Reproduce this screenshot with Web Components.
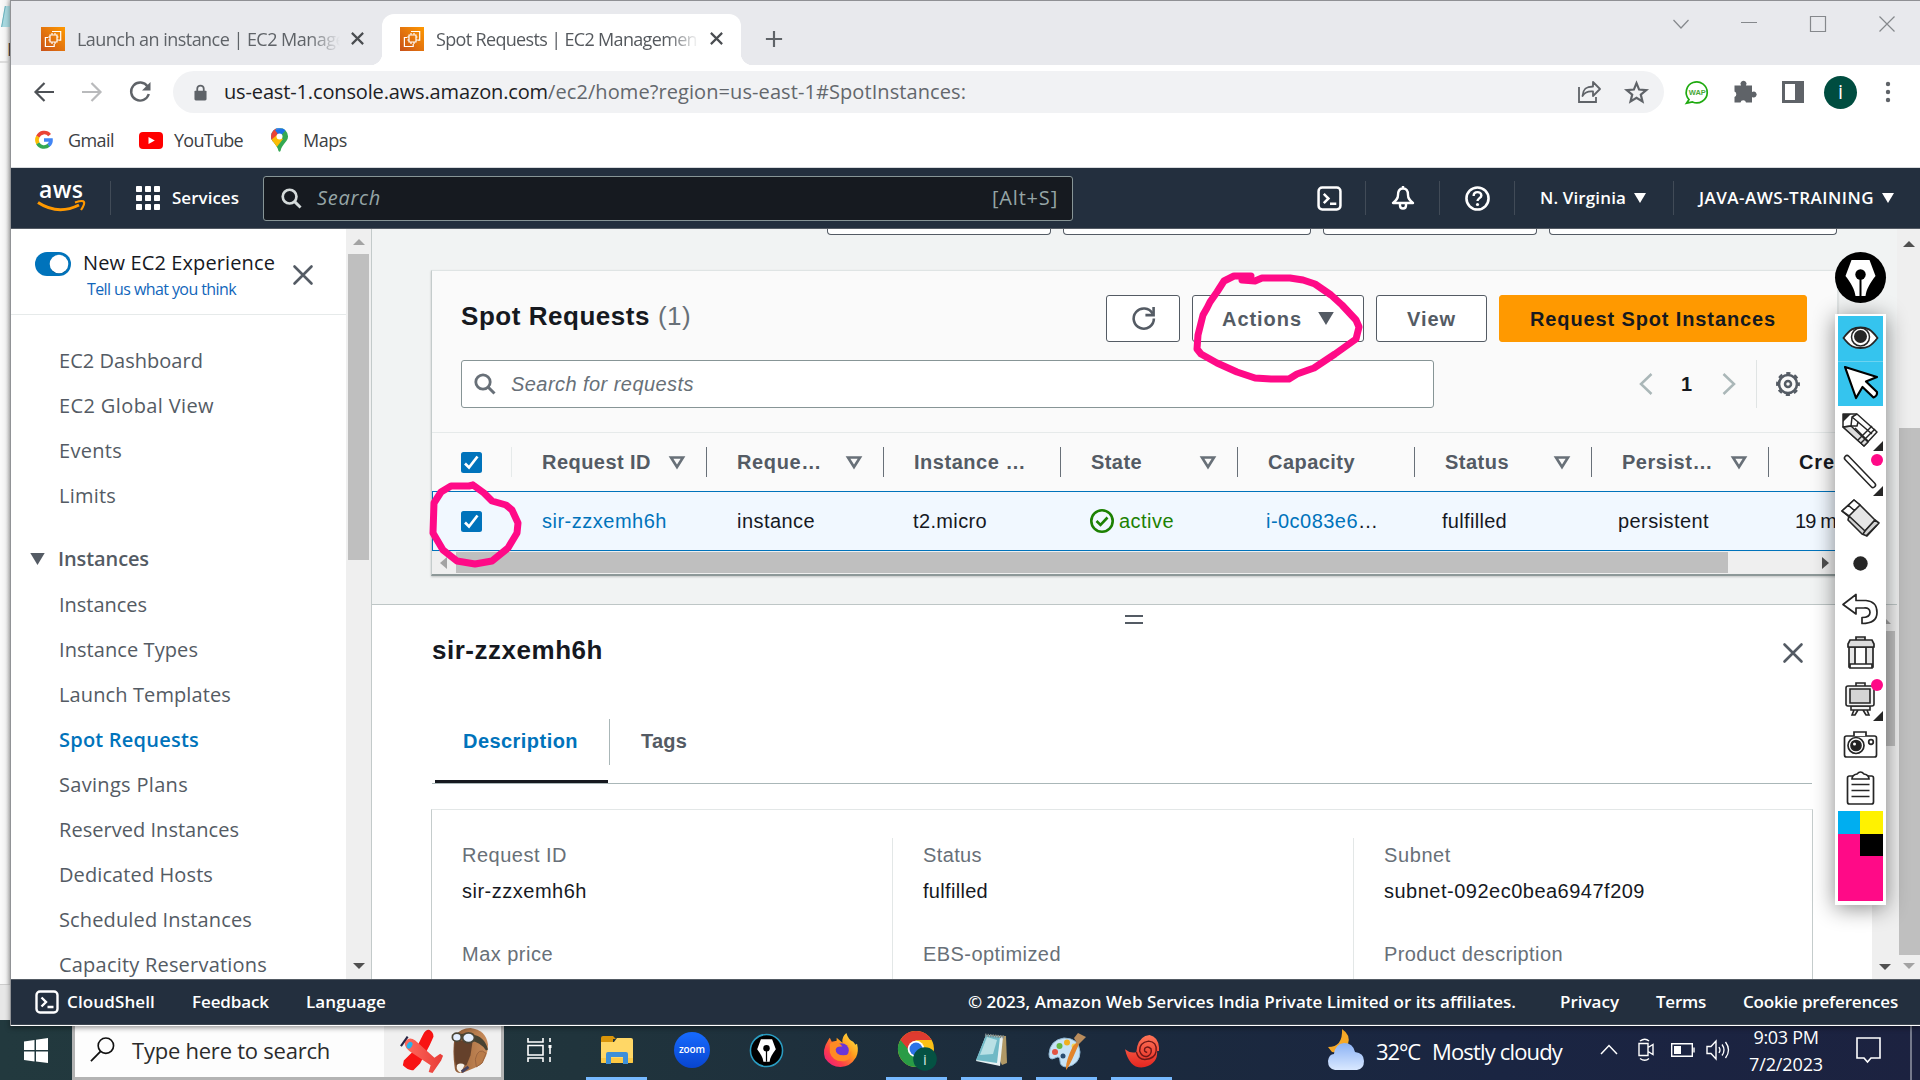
<!DOCTYPE html>
<html lang="en"><head><meta charset="utf-8"><title>Spot Requests | EC2 Management Console</title>
<style>
html,body{margin:0;width:1920px;height:1080px;overflow:hidden;background:#fff}
</style></head><body>
<desk-top></desk-top>
<script>
const SEG='"Open Sans","Noto Sans",sans-serif', ARI='"Liberation Sans",Arial,sans-serif';
const define=(tag,css,html)=>customElements.define(tag,class extends HTMLElement{
  constructor(){super();this.attachShadow({mode:'open'}).innerHTML='<style>*{box-sizing:border-box}:host{box-sizing:border-box;display:flex;flex:none}'+css+'</style>'+html;}
});

/* single line of text, tracked so that it fills the width given in "w" */
customElements.define('ui-text',class extends HTMLElement{
  constructor(){super();this.attachShadow({mode:'open'}).innerHTML='<style>:host{display:block;flex:none;white-space:pre}span{display:inline-block}</style><span><slot></slot></span>';}
  connectedCallback(){
    const s=this.shadowRoot.querySelector('span'),w=+this.getAttribute('w');
    const x=+this.getAttribute('x');if(x)this.style.marginLeft=x+'px';
    if(!w)return;
    this.style.width=w+'px';
    const fit=()=>{s.style.letterSpacing='0px';const n=this.textContent.length,b=s.getBoundingClientRect().width;if(b)s.style.letterSpacing=((w-b)/n).toFixed(3)+'px';};
    fit();requestAnimationFrame(fit);
  }
});

const PEN='<path d="M-9-18h18l6 16C9 6 6 11 5 18H-5C-6 11-9 6-15-2Z" fill="#fff"/><circle cy="-3.500" r="5.200" fill="#000"/><path d="M0 0V18" stroke="#000" stroke-width="2"/>';
const SHELL='<rect x="1.500" y="1.500" width="21" height="21" rx="3.500" fill="none" stroke="#fff" stroke-width="2.400"/><path d="M6.500 7.500l4.500 4.500-4.500 4.500M12.500 17h6" fill="none" stroke="#fff" stroke-width="2.400"/>';
const ICONS={
 ec2:['24 24','<defs><linearGradient id="g" x1="0" y1="1" x2="1" y2="0"><stop offset="0" stop-color="#c8511b"/><stop offset="1" stop-color="#f90"/></linearGradient></defs><path d="M0 0h24v24H0z" fill="url(#g)"/><g fill="none" stroke="#fff" stroke-width="1.200"><path d="M9 8h7v7H9z"/><path d="M11 7.800V6m3 1.800V6m-3 11v-2m3 2v-2M9 10H7.300M9 13H7.300M17.500 10H16m1.500 3H16"/><path d="M11 4.500h8.700v8.700h-2.200M7.200 10.500H4.400v9h8.800v-2.400"/></g>'],
 x:['16 16','<path d="M2 2l12 12M14 2L2 14" stroke="#4a4d51" stroke-width="2.300"/>'],
 plus:['20 20','<path d="M10 1v18M1 10h18" stroke="#5f6368" stroke-width="2.400"/>'],
 back:['20 20','<path d="M20 10H2M10.500 1L1.500 10l9 9" fill="none" stroke="#4d5156" stroke-width="2.200"/>'],
 fwd:['20 20','<path d="M0 10h18M9.500 1l9 9-9 9" fill="none" stroke="#b9babc" stroke-width="2.200"/>'],
 reload:['22 22','<path d="M18.600 5.500A9 9 0 1 0 19.800 13" fill="none" stroke="#5f6368" stroke-width="2.400"/><path d="M21.500 1v8.500H13z" fill="#5f6368"/>'],
 lock:['14 18','<path d="M1.500 7h11q1 0 1 1v8q0 1.500-1.500 1.500H2Q.5 17.500.5 16V8q0-1 1-1Z" fill="#5f6368"/><path d="M3.500 8V5a3.500 3.500 0 0 1 7 0v3" fill="none" stroke="#5f6368" stroke-width="1.900"/>'],
 share:['24 24','<path d="M2 7v15h17v-5" fill="none" stroke="#5f6368" stroke-width="1.800"/><path d="M5.500 16C6 9 9 6.500 16 6.500V2l7 7-7 7v-4.500C11 11 8 12 5.500 16Z" fill="none" stroke="#5f6368" stroke-width="1.800" stroke-linejoin="round"/>'],
 star:['22 22','<path d="M11 2l2.500 6.200 6.800.5-5.200 4.300 1.600 6.500-5.700-3.500-5.700 3.500 1.600-6.500L1.700 8.700l6.800-.5Z" fill="none" stroke="#5f6368" stroke-width="2.100"/>'],
 wap:['24 24','<path d="M4 19.500A10.500 10.500 0 1 1 7.500 22L1.500 23.200Z" fill="none" stroke="#1faa10" stroke-width="1.700"/><text x="12.300" y="14.500" font-size="7.500" font-weight="700" text-anchor="middle" fill="#49a93b" font-family="Liberation Sans">WAP</text>'],
 puzzle:['24 24','<path d="M1.500 5.500H8a3 3 0 1 1 5 0h6V12a3 3 0 1 1 0 5v5.500h-6a2.800 2.800 0 0 0-5.500 0h-6V17a3 3 0 0 0 0-5.500Z" fill="#5f6368"/>'],
 panel:['22 22','<path d="M1.500 1.500h19v19h-19z" fill="none" stroke="#5f6368" stroke-width="3"/><path d="M13 1h8v20h-8z" fill="#5f6368"/>'],
 dots:['6 22','<g fill="#5f6368"><circle cx="3" cy="3" r="2.200"/><circle cx="3" cy="11" r="2.200"/><circle cx="3" cy="19" r="2.200"/></g>'],
 google:['18 18','<g fill="none" stroke-width="3.600"><path d="M14.600 4.100A7 7 0 0 0 2.800 5.800" stroke="#ea4335"/><path d="M2.900 5.500a7 7 0 0 0 0 7" stroke="#fbbc04"/><path d="M2.800 12.300a7 7 0 0 0 11 1.800" stroke="#34a853"/><path d="M9 9h7c.1 2-.6 3.900-2.500 5.300" stroke="#4285f4"/></g>'],
 yt:['24 17','<rect width="24" height="17" rx="4" fill="#f00"/><path d="M9.500 5v7l6.300-3.500z" fill="#fff"/>'],
 maps:['17 24','<clipPath id="m"><path d="M8.500 0A8.300 8.300 0 0 1 17 8.400C17 14 11 15.500 9.500 23q-1 1.500-2 0C6 15.500 0 14 0 8.400A8.300 8.300 0 0 1 8.500 0Z"/></clipPath><g clip-path="url(#m)"><path d="M0 0h17v24H0z" fill="#34a853"/><path d="M-1 16L16 1-1-1z" fill="#4285f4"/><path d="M-1-1h5l4 9L2 14-1 12z" fill="#ea4335"/><path d="M4 2L16 0 9 9z" fill="#1a73e8"/><path d="M0 12l6-5 6 4-7 9z" fill="#fbbc04"/></g><circle cx="8.500" cy="8.400" r="3" fill="#fff"/>'],
 aws:['48 30','<text x="24" y="14.500" font-family="Open Sans" font-size="23" font-weight="600" fill="#fff" text-anchor="middle" textLength="44">aws</text><path d="M1 19.500q20 13 41 2.500" fill="none" stroke="#f90" stroke-width="3"/><path d="M38 19.500q8-2.500 9-.5t-3 8" fill="none" stroke="#f90" stroke-width="2.200"/>'],
 grid:['24 24','<g fill="#fff">'+[0,9,18].map(y=>[0,9,18].map(x=>`<rect x="${x}" y="${y}" width="6" height="6" rx=".8"/>`).join('')).join('')+'</g>'],
 search:['22 22','<circle cx="9" cy="9" r="7.200" fill="none" stroke="currentColor" stroke-width="2.800"/><path d="M14 14l6.500 6.500" stroke="currentColor" stroke-width="3"/>'],
 shell:['24 24',SHELL],
 bell:['24 24','<path d="M12 2.500c-4 0-5 3-5 6.500 0 4-2 5.500-5 8h20c-3-2.500-5-4-5-8 0-3.500-1-6.500-5-6.500Z" fill="none" stroke="#fff" stroke-width="2.400" stroke-linejoin="round"/><path d="M9 17.500v2q0 3 3 3t3-3v-2M12 0v3" fill="none" stroke="#fff" stroke-width="2.400"/>'],
 help:['24 24','<circle cx="12" cy="12" r="10.600" fill="none" stroke="#fff" stroke-width="2.500"/><path d="M8.300 9.500c0-5 7.400-4.500 7.400-.5 0 2.700-3.700 2.600-3.700 5.500" fill="none" stroke="#fff" stroke-width="2.300"/><circle cx="12" cy="17.800" r="1.500" fill="#fff"/>'],
 tri:['12 10','<path d="M0 0h12L6 10Z" fill="currentColor"/>'],
 sort:['16 13','<path d="M2 1.500h12L8 11Z" fill="none" stroke="#687078" stroke-width="2.600"/>'],
 toggle:['36 24','<rect width="36" height="24" rx="12" fill="#0073bb"/><circle cx="24" cy="12.600" r="9.300" fill="#06416b" opacity=".5"/><circle cx="24" cy="12" r="9.300" fill="#fff"/>'],
 close:['20 20','<path d="M1.500 1.500l17 17M18.500 1.500l-17 17" stroke="#545b64" stroke-width="2.600" stroke-linecap="round"/>'],
 check:['21 21','<rect width="21" height="21" rx="2.500" fill="#0073bb"/><path d="M4 11.500l4 4 8.500-11" fill="none" stroke="#fff" stroke-width="2.700"/>'],
 ok:['24 24','<circle cx="12" cy="12" r="10.700" fill="none" stroke="#1d8102" stroke-width="2.600"/><path d="M6.500 12l4 4 7-7.500" fill="none" stroke="#1d8102" stroke-width="2.600"/>'],
 refresh:['26 26','<path d="M22.500 8A10.500 10.500 0 1 0 23.800 13" fill="none" stroke="#545b64" stroke-width="2.700"/><path d="M23.500 1v8.500H15" fill="none" stroke="#545b64" stroke-width="2.700"/>'],
 prev:['14 22','<path d="M12.500 1L2 11l10.500 10" fill="none" stroke="#aab7b8" stroke-width="2.500"/>'],
 next:['14 22','<path d="M1.500 1L12 11 1.500 21" fill="none" stroke="#aab7b8" stroke-width="2.500"/>'],
 gear:['24 24','<circle cx="12" cy="12" r="9" fill="none" stroke="#545b64" stroke-width="2.600"/><circle cx="12" cy="12" r="10.800" fill="none" stroke="#545b64" stroke-width="2.300" stroke-dasharray="4.240 4.240" stroke-dashoffset="2.100"/><circle cx="12" cy="12" r="3" fill="none" stroke="#545b64" stroke-width="2.500"/>'],
 eye:['45 45','<path d="M5.500 22C12 13 16 11.500 22.500 11.500S33 13 39.500 22C33 30.500 29 32 22.500 32S12 30.500 5.500 22Z" fill="#fff" stroke="#262626" stroke-width="1.800"/><circle cx="22.500" cy="21" r="9" fill="#fff" stroke="#262626" stroke-width="1.500"/><circle cx="22.500" cy="20.500" r="6.500" fill="#262626"/>'],
 cursor:['45 45','<path d="M7 6l32 10-11 4.500 11 10.500q.5 4-3.500 5.500L24.500 26 18 37Z" fill="#fff" stroke="#000" stroke-width="2.200" stroke-linejoin="round"/>'],
 pencil:['45 45','<g stroke="#262626" stroke-width="1.500" fill="#fff" stroke-linejoin="round"><path d="M5 8h14l20 18L26 40 5 21Z"/><path d="M5 21l8-1 17 16-4 4z" fill="#ddd"/><path d="M19 8l-5 3-1 9-8 1M14 11l6 5-1 4-6 0M20 16l14 12M17 22l13 13M34 20L20 34M37 23L23 37" fill="none"/></g><path d="M5 8h8l-8 8zM45 35v10H35z" fill="#262626"/>'],
 line:['45 45','<path d="M9 7L35 34" stroke="#262626" stroke-width="6.500" stroke-linecap="round"/><path d="M9 7L35 34" stroke="#fff" stroke-width="3.400" stroke-linecap="round"/><path d="M45 35v10H35z" fill="#262626"/><circle cx="39" cy="9" r="6" fill="#ff0a87"/>'],
 eraser:['45 45','<g stroke="#262626" stroke-width="1.600" fill="#e6e6e6" stroke-linejoin="round"><path d="M16 4l5 4 16 16-11 12-16-16-6-5Z"/><path d="M16 4l6 5L11 20l-7-5ZM10 9l7 6" fill="#fff"/><path d="M37 24l4 3-12 13-5-2-14-14 1-4 16 15Z" fill="#d2d2d2"/><path d="M39 29L28 40M27 35l-2 3" fill="none"/></g>'],
 dot:['45 45','<circle cx="22.500" cy="22.500" r="7.200" fill="#262626"/>'],
 undo:['45 45','<path d="M5 18.500L18 8.500v6h10q11 1 11 12t-15 11v-6q8 0 8-5t-6-4.500H18v6Z" fill="#fff" stroke="#262626" stroke-width="1.700" stroke-linejoin="round"/>'],
 trash:['45 45','<g stroke="#262626" stroke-width="1.700" fill="#e7e7e7"><path d="M18 9V6h9v3" fill="#ccc"/><path d="M11 16h24v20H11z"/><path d="M17 16h11v20H17z" fill="#fff"/><path d="M12 9h22l2 4v3H10v-3Z" fill="#ddd"/><path d="M12 33h22v4H12z" fill="#fff"/></g>'],
 board:['45 45','<g stroke="#262626" stroke-width="1.600" fill="#f3f3f3"><path d="M13 30h19v4H13zM16 34l-2 5h3l3-5M29 34l2 5h-3l-3-5M18 10V7h9v3"/><rect x="8" y="10" width="28" height="20" rx="2"/><path d="M12 13h20v14H12z" fill="#d5d5d5"/></g><path d="M45 35v10H35z" fill="#262626"/><circle cx="39" cy="9" r="6" fill="#ff0a87"/>'],
 camera:['45 45','<g stroke="#262626" stroke-width="1.700" fill="#fff"><rect x="6.500" y="15" width="32" height="21" rx="2"/><path d="M16 15v-4h12v4"/><circle cx="18" cy="24.500" r="8"/><circle cx="18" cy="24.500" r="5" fill="#222"/><circle cx="33" cy="21" r="2.300"/></g><circle cx="16.500" cy="23" r="1.500" fill="#fff"/>'],
 clip:['45 45','<g stroke="#262626" stroke-width="1.700" fill="#fff"><rect x="9.500" y="10" width="26" height="28" rx="2"/><path d="M14 13q0-4 5-5 3.500-4 7 0 5 1 5 5Z"/><path d="M13.500 18.500h18M13.500 24.500h18M13.500 30.500h18" stroke-width="1.400"/></g>'],
 win:['24 25','<path d="M0 3.500L10.500 2v10H0zM12 1.700L24 0v12H12zM0 13.500h10.500v10L0 22zM12 13.500h12V25l-12-1.600z" fill="#fff"/>'],
 wsearch:['26 26','<circle cx="16.500" cy="9" r="8" fill="none" stroke="#111" stroke-width="1.700"/><path d="M11 15L1 25" stroke="#111" stroke-width="1.900"/>'],
 plane:['46 46','<defs><linearGradient id="p"><stop offset="0" stop-color="#ff6a5e"/><stop offset="1" stop-color="#e83b36"/></linearGradient></defs><path d="M24 6Q27 0 31 1 35 3 35 8L31 17 21 36 14 43Q9 44 3 38L4 33 17 20Z" fill="#f81313"/><path d="M5 14q4-7 11-2l20 18 6-4 3 2-2 5-9 13-4-1 2-7L14 26Q4 20 5 14Z" fill="url(#p)"/><ellipse cx="10" cy="17" rx="2.600" ry="3.800" transform="rotate(35 10 17)" fill="#27b3ea"/><path d="M1 18L8 8" stroke="#282442" stroke-width="2.200"/>'],
 hat:['38 47','<defs><linearGradient id="h"><stop offset="0" stop-color="#8a5836"/><stop offset=".5" stop-color="#b4794a"/><stop offset="1" stop-color="#c98d5c"/></linearGradient></defs><path d="M4 8Q10 0 20 0 36 2 38 17 38 30 30 38L24 41 12 46Q5 47 4 42Q1 24 4 8Z" fill="url(#h)"/><path d="M4 14Q14 11 22 15 21 22 20 28L16 38 6 42Q2 27 4 14Z" fill="#65412b"/><path d="M36 26Q28 19 25 32L26 40 32 36Z" fill="#b97b49" stroke="#9a6540"/><path d="M22 7Q34 8 38 22L36 23Q30 14 20 13Z" fill="#474232"/><path d="M1 9L13 8" stroke="#474232" stroke-width="4"/><ellipse cx="6" cy="9.500" rx="4.600" ry="4.200" fill="#e4efff" stroke="#4b4638" stroke-width="1.800"/><ellipse cx="18" cy="10" rx="6.200" ry="5" fill="#e4efff" stroke="#4b4638" stroke-width="2"/><path d="M6 38q4-3 8 0l-4 8q-5-2-4-8Z" fill="#f5f0e8"/><path d="M11 45l7-5" stroke="#45425f" stroke-width="3"/>'],
 tasks:['25 24','<path d="M1 0v4h15V0M1 24v-4h15v4M1 7.500h15v9.500H1zM23 0v4M23 7v9M23 19v5" fill="none" stroke="#fff" stroke-width="1.600"/><path d="M21.500 7h3v3h-3z" fill="#fff"/>'],
 folder:['32 28','<path d="M0 2q0-2 2-2h10l3 3h-3v6H0z" fill="#d9950a"/><path d="M0 6h13l3-4h14q2 0 2 2v22q0 1-1 1H1q-1 0-1-1z" fill="#ffd766"/><path d="M0 22h32v5H0z" fill="#fbc02d" opacity=".6"/><path d="M5 28V18q0-2 2-2h18q2 0 2 2v10h-5v-7H10v7Z" fill="#3d8fd8"/>'],
 zoom:['36 36','<defs><linearGradient id="z" x2="0" y2="1"><stop offset="0" stop-color="#176bff"/><stop offset="1" stop-color="#0845cf"/></linearGradient></defs><circle cx="18" cy="18" r="18" fill="url(#z)"/><text x="18" y="20.500" font-family="Open Sans" font-size="10" font-weight="600" fill="#fff" text-anchor="middle" textLength="26">zoom</text>'],
 pen:['36 36','<circle cx="18" cy="18" r="16.500" fill="#000" stroke="#2a9bc0" stroke-width="1.600"/><g transform="translate(18 18) scale(.64)">'+PEN+'</g>'],
 penbig:['51 51','<circle cx="25.500" cy="25.500" r="25.500" fill="#000"/><g transform="translate(25.500 26)">'+PEN+'</g>'],
 firefox:['36 36','<defs><linearGradient id="f" x1="1" y1="0" x2="0" y2="1"><stop offset="0" stop-color="#fff24a"/><stop offset=".4" stop-color="#ff9a1c"/><stop offset=".7" stop-color="#ff3d4a"/><stop offset="1" stop-color="#e5148c"/></linearGradient></defs><path d="M4 8q1-2 2-3l2 4 5-1V5l6 5q-1-6 4-10 2 7 7 9 2 2 2 3l2-1q2 8-1 14-6 10-16 10T1 26Q-2 17 4 8Z" fill="url(#f)"/><circle cx="18" cy="18" r="7.500" fill="#6a35d8"/><path d="M6 11q8-4 13 3-6-1-7 3 0 6 8 6 6 0 8-5 1 9-7 11-12 1-15-9Z" fill="#ff8a24"/>'],
 chrome:['40 42','<circle cx="18" cy="18" r="18" fill="#fbc116"/><path d="M18 18h0L2.400 9A18 18 0 0 0 18 36L26 22Z" fill="#299c46"/><path d="M18 9h15.600L26 20z" fill="#fbc116"/><path d="M2.400 9A18 18 0 0 1 33.600 9H18L10 18Z" fill="#df3b30"/><circle cx="18" cy="18" r="8.300" fill="#fff"/><circle cx="18" cy="18" r="6.500" fill="#2d73e8"/><circle cx="27" cy="28" r="11.800" fill="#055243"/><text x="27" y="33.500" font-family="Open Sans" font-size="15" fill="#d5e5df" text-anchor="middle">i</text>'],
 notepad:['34 34','<path d="M12 2l19 1 1 27-5 2z" fill="#b09866"/><path d="M11 2l17 2-3 29L1 28Z" fill="#e8f1f3"/><path d="M11 2l14 2-3 26L1 27Z" fill="#70b9c6"/><path d="M12 4l10 3-4 14L5 22Z" fill="#b9e0e5"/><path d="M10 2l19 2" stroke="#7d8a8c" stroke-width="3" stroke-dasharray="1.500 1"/>'],
 paint:['38 38','<path d="M16 6Q31 6 32 20q0 12-13 15-7 0-7-6t-5-3q-6 3-6-4Q2 8 16 6Z" fill="#c8e3f6" stroke="#8fb6d2"/><circle cx="7" cy="20" r="3" fill="#e35443"/><circle cx="11.500" cy="14" r="3" fill="#65b943"/><circle cx="19" cy="10.500" r="3" fill="#f0b020"/><circle cx="26" cy="14" r="2.500" fill="#f4d450"/><circle cx="15" cy="24" r="2.500" fill="#2a4d72"/><path d="M18 36Q18 28 25 14l4-4 2 2-4 9Q21 35 18 38Z" fill="#e2852c"/><path d="M26 6l4-5 8 4-8 8z" fill="#b98c5c"/>'],
 snail:['36 35','<defs><linearGradient id="s" x2="0" y2="1"><stop offset="0" stop-color="#ff7558"/><stop offset="1" stop-color="#e52620"/></linearGradient></defs><path d="M0 15Q6 20 12 18L13 12Q16 1 26 0 35 2 36 13V17H34Q35 30 21 34 5 37 0 15Z" fill="url(#s)"/><path d="M33 17Q34 7 25 6.500 15 8 15.500 17 18 24 24 22.500 29 20 27.500 14.500 24 11 21 14 19.500 18 23.500 18.500M12 18q2 8 9 8 11-1 12-9" fill="none" stroke="#6e1717" stroke-width="1.500"/>'],
 weather:['36 42','<defs><linearGradient id="w" x2="0" y2="1"><stop offset="0" stop-color="#8bb2f5"/><stop offset="1" stop-color="#d9e8ff"/></linearGradient></defs><path d="M14 0q9 6 6 15-5 10-16 8l-4-5q15 0 14-18Z" fill="#f7a927"/><path d="M7 41q-7-1-7-9 1-7 6-7 1-10 10-11 9 0 11 9 9 1 9 9t-7 9Z" fill="url(#w)"/>'],
 chev:['18 11','<path d="M1 10l8-8.500L17 10" fill="none" stroke="#fff" stroke-width="1.500"/>'],
 meet:['17 24','<path d="M2 5.500h9v12H2zM11 9.500l5-3v10l-5-3M3 3q5-3.500 9 0M3 20.500q5 3.500 9 0" fill="none" stroke="#fff" stroke-width="1.400"/>'],
 batt:['24 14','<path d="M.7.700h20.600v12.600H.7zM23 4.500v5" fill="none" stroke="#fff" stroke-width="1.400"/><path d="M3 3h7v8H3z" fill="#fff"/>'],
 vol:['24 20','<path d="M1 6.500h4L10 1v18L5 13.500H1z" fill="none" stroke="#fff" stroke-width="1.400"/><path d="M13 7q2 3 0 6M16 4.500q4 5.500 0 11M19.500 2q6 8 0 16" fill="none" stroke="#fff" stroke-width="1.300"/>'],
 note:['26 26','<path d="M1 1h23v20H15l-3.500 4L8 21H1z" fill="none" stroke="#fff" stroke-width="1.600"/>'],
 wdown:['16 10','<path d="M.5 1l7.500 8 7.500-8" fill="none" stroke="#85888c" stroke-width="1.200"/>'],
 wmin:['16 10','<path d="M0 5.500h16" stroke="#85888c"/>'],
 wmax:['16 16','<path d="M.5.5h15v15H.5z" fill="none" stroke="#85888c" stroke-width="1.200"/>'],
 wx:['16 16','<path d="M.5.500l15 15M15.500.500l-15 15" stroke="#85888c" stroke-width="1.200"/>']
};
customElements.define('ui-icon',class extends HTMLElement{
  constructor(){super();this.attachShadow({mode:'open'});}
  connectedCallback(){
    const [vb,body]=ICONS[this.getAttribute('name')],[vw,vh]=vb.split(' ');
    const w=this.getAttribute('w')||vw,h=this.getAttribute('h')||(vh*w/vw),x=this.getAttribute('x')||0;
    this.shadowRoot.innerHTML=`<style>:host{display:block;flex:none;width:${w}px;height:${h}px;margin-left:${x}px}svg{display:block;overflow:visible}</style><svg width="${w}" height="${h}" viewBox="0 0 ${vb}">${body}</svg>`;
  }
});

/* scroll bar; attributes: thumb and gap lengths, up / down arrow colours */
customElements.define('scroll-bar',class extends HTMLElement{
  constructor(){super();this.attachShadow({mode:'open'});}
  connectedCallback(){
    const a=n=>this.getAttribute(n);
    this.shadowRoot.innerHTML=`<style>:host{display:flex;flex-direction:column;align-items:center;justify-content:space-between;flex:none;background:#efefef;overflow:hidden}
    i{display:block;width:0;height:0;flex:none;border:6px solid transparent}
    .u{border-top:0;border-bottom-color:${a('up')};margin-top:${a('ut')||10}px}.d{border-bottom:0;border-top-color:${a('down')};margin-bottom:10px}
    b{display:block;flex:none;width:${a('bw')||21}px;background:#bfbfbf;height:${a('thumb')}px;margin-top:${a('gap')}px}s{flex:1}</style><i class="u"></i><b></b><s></s><i class="d"></i>`;
  }
});

/* browser chrome */
define('browser-tab',`:host{align-items:center;height:51px;width:359px;padding-bottom:2px;color:#5f6368;font:18px/24px ${SEG};border-radius:12px 12px 0 0}
 :host([active]){background:#fff;color:#55595e}
 .t{width:263px;margin-left:12px;overflow:hidden;-webkit-mask-image:linear-gradient(90deg,#000 88%,transparent)}`,
 `<ui-icon name="ec2"></ui-icon><div class="t"><slot></slot></div><ui-icon name="x" w="15" x="10"></ui-icon>`);
define('tab-strip',`:host{height:64px;background:#e8e9ed;align-items:flex-end;border-top:0}
 .a{padding-left:30px}.b{padding-left:18px;margin-left:0;position:relative}
 .b:before,.b:after{content:"";position:absolute;bottom:0;width:12px;height:12px}
 .b:before{left:-12px;background:radial-gradient(circle at 0 0,transparent 12px,#fff 12.5px)}
 .b:after{right:-12px;background:radial-gradient(circle at 100% 0,transparent 12px,#fff 12.500px)}
 .p{height:51px;display:flex;align-items:center;padding-bottom:2px}.w{height:64px;display:flex;align-items:flex-start;margin-left:auto}
 .w ui-icon{margin-top:15px}`,
 `<browser-tab class="a" style="width:371px"><ui-text w="268">Launch an instance | EC2 Manage</ui-text></browser-tab>
 <browser-tab class="b" active><ui-text w="261">Spot Requests | EC2 Managemen</ui-text></browser-tab>
 <div class="p"><ui-icon name="plus" w="18" x="24"></ui-icon></div>
 <div class="w"><ui-icon name="wdown" style="padding-top:3px"></ui-icon><ui-icon name="wmin" x="52" style="padding-top:1px"></ui-icon><ui-icon name="wmax" x="53"></ui-icon><ui-icon name="wx" x="53" style="margin-right:25px"></ui-icon></div>`);
define('address-row',`:host{height:54px;align-items:center;background:#fff;font:20px/28px ${SEG};padding-left:23px}
 .bar{display:flex;align-items:center;flex:none;width:1491px;height:42px;border-radius:21px;background:#f1f2f4;margin-left:22px;color:#202124}
 .g{color:#63676c}.av{width:33px;height:33px;border-radius:50%;background:#004d40;color:#fff;text-align:center;font:20px/32px ${SEG};margin-left:20px}`,
 `<ui-icon name="back" w="20"></ui-icon><ui-icon name="fwd" w="20" x="28"></ui-icon><ui-icon name="reload" w="22" x="27"></ui-icon>
 <div class="bar"><ui-icon name="lock" w="13" h="17" x="21"></ui-icon><ui-text w="324" x="17">us-east-1.console.aws.amazon.com</ui-text><ui-text class="g" w="418">/ec2/home?region=us-east-1#SpotInstances:</ui-text>
 <ui-icon name="share" x="611" w="24"></ui-icon><ui-icon name="star" w="23" x="24"></ui-icon></div>
 <ui-icon name="wap" w="24" x="21"></ui-icon><ui-icon name="puzzle" w="24" x="24"></ui-icon><ui-icon name="panel" w="22" x="25"></ui-icon><div class="av">i</div><ui-icon name="dots" w="6" x="28"></ui-icon>`);
define('bookmark-bar',`:host{height:49px;align-items:flex-start;background:#fff;font:18px/42px ${SEG};color:#3c4043;padding-left:24px;border-bottom:1px solid #d8dadd}
 div{display:flex;align-items:center;height:42px}`,
 `<div><ui-icon name="google"></ui-icon><ui-text w="46" x="15">Gmail</ui-text><ui-icon name="yt" x="25"></ui-icon><ui-text w="69" x="11">YouTube</ui-text><ui-icon name="maps" x="28"></ui-icon><ui-text w="44" x="15">Maps</ui-text></div>`);

define('aws-nav',`:host{height:61px;background:#232f3e;align-items:center;border-bottom:1px solid #545b64;color:#fff;font:600 17px/24px ${SEG}}
 hr{width:1px;height:34px;border:0;margin:0;background:#414b57;flex:none}
 .s{display:flex;align-items:center;width:810px;height:45px;margin-left:24px;border:1px solid #879596;border-radius:3px;background:#161a20;color:#95a5a6;font:italic 20px/28px ${SEG}}
 .s ui-icon{color:#d5dbdb}.s .k{font-style:normal;color:#95a5a6}`,
 `<ui-icon name="aws" x="26" w="48"></ui-icon><hr style="margin-left:25px"><ui-icon name="grid" x="25"></ui-icon><ui-text w="67" x="12">Services</ui-text>
 <div class="s"><ui-icon name="search" x="17" w="21"></ui-icon><ui-text w="64" x="15">Search</ui-text><ui-text class="k" w="66" x="611">[Alt+S]</ui-text></div>
 <ui-icon name="shell" w="25" x="244"></ui-icon><hr style="margin-left:23px"><ui-icon name="bell" w="24" x="25"></ui-icon><hr style="margin-left:24px"><ui-icon name="help" x="25" w="25"></ui-icon><hr style="margin-left:24px">
 <ui-text w="86" x="25">N. Virginia</ui-text><ui-icon name="tri" x="8"></ui-icon><hr style="margin-left:27px"><ui-text w="175" x="25">JAVA-AWS-TRAINING</ui-text><ui-icon name="tri" x="8"></ui-icon>`);

/* side navigation */
define('side-nav',`:host{width:361px;height:750px;border-right:1px solid #c3caca;background:#fff;font:20px/45px ${SEG};color:#545b64}
 .l{width:335px;overflow:hidden}
 .top{height:86px;display:flex;border-bottom:1px solid #e6eaea;padding-left:24px;align-items:flex-start}
 .top ui-icon:first-child{margin-top:23px}
 .n{margin-left:12px;color:#16191f;line-height:26px;padding-top:21px;width:204px;flex:none}.n .k{font-size:16px;line-height:26px;color:#1166bb}
 .items{padding-left:48px;padding-top:22.500px}.h{display:flex;align-items:center;font-weight:600;margin:18.500px 0 1px -29px;height:45px}
 .on{color:#0073bb;font-weight:600}`,
 `<div class="l"><div class="top"><ui-icon name="toggle"></ui-icon><div class="n"><ui-text w="192">New EC2 Experience</ui-text><ui-text class="k" w="149" x="4">Tell us what you think</ui-text></div><ui-icon name="close" w="20" x="6" style="margin-top:36px"></ui-icon></div>
 <div class="items">${[['EC2 Dashboard',144],['EC2 Global View',155],['Events',63],['Limits',57]].map(a=>`<ui-text w="${a[1]}">${a[0]}</ui-text>`).join('')}
 <div class="h"><ui-icon name="tri" w="15" h="12" ></ui-icon><ui-text w="91" x="13">Instances</ui-text></div>
 ${[['Instances',88],['Instance Types',139],['Launch Templates',172],['Spot Requests',140,1],['Savings Plans',129],['Reserved Instances',180],['Dedicated Hosts',154],['Scheduled Instances',193],['Capacity Reservations',208]].map(a=>`<ui-text w="${a[1]}"${a[2]?' class="on"':''}>${a[0]}</ui-text>`).join('')}</div></div>
 <scroll-bar style="width:25px" up="#a3a3a3" down="#505050" gap="9" thumb="306"></scroll-bar>`);

/* spot request table */
define('ui-button',`:host{height:47px;align-items:center;justify-content:center;border:1.500px solid #545b64;border-radius:3px;background:#fff;color:#545b64;font:700 20px/26px ${ARI}}
 :host([primary]){background:#f90;border-color:#f90;color:#16191f}`,`<slot></slot>`);
define('col-head',`:host{width:177px;height:30px;align-items:center;border-right:1px solid #687078;padding-left:30px;font:700 20px/26px ${ARI};color:#545b64}
 ui-icon{margin-left:auto;margin-right:21px}:host(:not([sort])) ui-icon{display:none}slot{display:block}.z{margin-left:auto}`,`<slot></slot><div class="z"></div><ui-icon name="sort"></ui-icon>`);
define('request-table',`:host{flex-direction:column;width:1407px;height:306px;background:#fafafa;border:1px solid #dfe4e4;border-left-color:#c5cccc;border-bottom:2px solid #8d9898;overflow:hidden;box-shadow:0 1px 2px #0003;font:20px/26px ${ARI};color:#16191f}
 .r{display:flex;align-items:center;flex:none}
 .a{height:71px;align-items:flex-end;padding-left:29px}.ti{align-self:flex-end;display:flex;height:52px;align-items:center;font-size:26px;color:#687078}.ti b{color:#16191f}
 .f{height:91px;padding-left:29px;align-items:center;border-bottom:1px solid #e6eaea;padding-bottom:6px}
 .in{display:flex;align-items:center;width:973px;height:48px;background:#fff;border:1.500px solid #879596;border-radius:3px;font-style:italic;color:#687078}
 hr{width:1px;height:48px;background:#e0e4e4;border:0;margin:0 0 0 20px}
 .h{height:58px;padding-left:29px}.h col-head:last-child{color:#16191f;border:0}
 .row{height:60px;border:1.500px solid #0073bb;border-right:0;background:#f1f8ff;padding-left:28px}
 .c{width:177px;flex:none;display:flex;align-items:center}.c:nth-child(n){color:#16191f}.c .b{color:#0073bb}.c .g{color:#1d8102}
 .sb{height:23px;background:#efefef;flex:none;display:flex;align-items:center}.sb b{width:1272px;height:21px;background:#bfbfbf;margin-left:9px}
 .sb i{border:6px solid transparent;border-left:0;border-right:7px solid #a3a3a3;margin-left:8px}.sb i.e{border:6px solid transparent;border-right:0;border-left:7px solid #505050;margin-left:94px}`,
 `<div class="r a"><div class="ti"><b><ui-text w="189">Spot Requests</ui-text></b><ui-text w="33" x="8">(1)</ui-text></div>
 <ui-button style="width:74px;margin-left:415px"><ui-icon name="refresh" w="25"></ui-icon></ui-button>
 <ui-button style="width:172px;margin-left:12px"><ui-text w="80">Actions</ui-text><ui-icon name="tri" w="16" h="13" x="16"></ui-icon></ui-button>
 <ui-button style="width:111px;margin-left:12px"><ui-text w="49">View</ui-text></ui-button>
 <ui-button primary style="width:308px;margin-left:12px"><ui-text w="246">Request Spot Instances</ui-text></ui-button></div>
 <div class="r f"><div class="in"><ui-icon name="search" x="12" w="22"></ui-icon><ui-text w="183" x="15">Search for requests</ui-text></div>
 <div class="r pg"><ui-icon name="prev" x="205" w="14"></ui-icon><ui-text w="12" x="28" style="font-weight:700">1</ui-text><ui-icon name="next" x="29" w="14"></ui-icon><hr><ui-icon name="gear" x="19"></ui-icon></div></div>
 <div class="r h"><ui-icon name="check"></ui-icon><div style="width:1px;height:30px;background:#e6eaea;margin-left:29px;flex:none"></div>
 <col-head sort style="width:195px"><ui-text w="109">Request ID</ui-text></col-head><col-head sort><ui-text w="85">Reque…</ui-text></col-head><col-head><ui-text w="112">Instance …</ui-text></col-head><col-head sort><ui-text w="51">State</ui-text></col-head><col-head><ui-text w="87">Capacity</ui-text></col-head><col-head sort><ui-text w="64">Status</ui-text></col-head><col-head sort><ui-text w="91">Persist…</ui-text></col-head><col-head style="width:70px"><ui-text w="36">Cre</ui-text></col-head></div>
 <div class="r row"><ui-icon name="check"></ui-icon>
 <div class="c" style="width:195px;margin-left:60px"><ui-text class="b" w="125">sir-zzxemh6h</ui-text></div><div class="c" style="width:176px"><ui-text w="78">instance</ui-text></div><div class="c"><ui-text w="74">t2.micro</ui-text></div><div class="c" style="width:176px"><ui-icon name="ok"></ui-icon><ui-text class="g" w="55" x="5">active</ui-text></div><div class="c" style="width:176px"><ui-text class="b" w="92">i-0c083e6</ui-text><ui-text w="20">…</ui-text></div><div class="c" style="width:176px"><ui-text w="65">fulfilled</ui-text></div><div class="c"><ui-text w="91">persistent</ui-text></div><div class="c" style="width:44px"><ui-text w="41">19 m</ui-text></div></div>
 <div class="sb"><i></i><b></b><i class="e"></i></div>`);
define('top-actions',`:host{height:41px;padding-left:455px;gap:12px;align-items:flex-start;overflow:hidden}
 i{height:6px;background:#fff;border:1.500px solid #545b64;border-top:0;border-radius:0 0 4px 4px}`,
 `<i style="width:224px"></i><i style="width:248px"></i><i style="width:214px"></i><i style="width:288px"></i>`);

/* details panel */
define('detail-field',`:host{flex-direction:column;font:20px/26px ${ARI};color:#16191f;height:99px;gap:10px}::slotted(:first-child){color:#687078}`,`<slot></slot>`);
define('detail-panel',`:host{height:375px;width:1525px;background:#fff;border-top:1.500px solid #bec6c6;overflow:hidden;font:20px/26px ${ARI}}
 .m{width:1500px;padding-left:60px;display:flex;flex-direction:column}
 .g{width:18px;height:9px;border:solid #545b64;border-width:2px 0;margin:10px 0 0 693px;flex:none}
 .t{display:flex;align-items:center;width:1380px;height:50px;margin-top:1px;font-weight:700;font-size:26px;color:#16191f;flex:none}.t ui-icon{margin-top:5px}
 .tabs{display:flex;height:109px;align-items:flex-end;width:1380px;border-bottom:1.500px solid #aab7b8;flex:none;font-weight:700;color:#545b64}
 .tab{height:82px;display:flex;align-items:center;padding-bottom:2px}.on{padding-bottom:0;width:173px;margin-left:3px;padding-left:28px;color:#0073bb;border-bottom:3px solid #16191f}
 .card{width:1382px;height:200px;margin:25px 0 0 -1px;border:1.500px solid #e3e7e7;border-left-color:#c5cccc;border-right-color:#c5cccc;padding:28px 0 0 30px;display:flex;flex:none}
 .col{width:461px;border-left:1px solid #e3e7e7;padding:4px 0 0 30px;flex:none}.col:first-child{border:0;padding-left:0;width:430px}.col:last-child{width:400px}`,
 `<div class="m"><div class="g"></div><div class="t"><ui-text w="171">sir-zzxemh6h</ui-text><ui-icon name="close" w="20" x="1180"></ui-icon></div>
 <div class="tabs"><div class="tab on"><ui-text w="115">Description</ui-text></div><div style="width:1px;height:46px;background:#aab7b8;margin:0 0 18px 1px"></div><div class="tab"><ui-text w="46" x="31">Tags</ui-text></div></div>
 <div class="card"><div class="col"><detail-field><ui-text w="105">Request ID</ui-text><ui-text w="125">sir-zzxemh6h</ui-text></detail-field><detail-field><ui-text w="91">Max price</ui-text></detail-field></div>
 <div class="col"><detail-field><ui-text w="59">Status</ui-text><ui-text w="65">fulfilled</ui-text></detail-field><detail-field><ui-text w="138">EBS-optimized</ui-text></detail-field></div>
 <div class="col"><detail-field><ui-text w="67">Subnet</ui-text><ui-text w="261">subnet-092ec0bea6947f209</ui-text></detail-field><detail-field><ui-text w="179">Product description</ui-text></detail-field></div></div></div>
 <scroll-bar style="width:25px;height:375px" up="#a3a3a3" ut="13" down="#505050" gap="7" thumb="115"></scroll-bar>`);

define('aws-footer',`:host{height:46px;background:#232f3e;border-top:1px solid #545b64;border-bottom:1px solid #3c4650;align-items:center;color:#fff;font:600 17px/24px ${SEG}}`,
 `<ui-icon name="shell" x="24" w="24"></ui-icon><ui-text w="88" x="8">CloudShell</ui-text><ui-text w="77" x="37">Feedback</ui-text><ui-text w="80" x="37">Language</ui-text><ui-text w="548" x="582">© 2023, Amazon Web Services India Private Limited or its affiliates.</ui-text><ui-text w="59" x="44">Privacy</ui-text><ui-text w="50" x="37">Terms</ui-text><ui-text w="155" x="37">Cookie preferences</ui-text>`);
define('browser-window',`:host{flex-direction:column;width:1910px;height:1026px;border-left:1px solid #919396;border-top:1px solid #8f9094;background:#fff}
 .b{display:flex;height:750px}.mid{display:flex;flex-direction:column;width:1525px;background:#f1f3f3;flex:none}request-table{margin-left:59px}.gap{height:28px;flex:none}`,
 `<tab-strip></tab-strip><address-row></address-row><bookmark-bar></bookmark-bar><aws-nav></aws-nav>
 <div class="b"><side-nav></side-nav><div class="mid"><top-actions></top-actions><request-table></request-table><div class="gap"></div><detail-panel></detail-panel></div>
 <scroll-bar style="width:23px;height:750px;padding-left:1px" bw="21" up="#505050" ut="12" down="#a3a3a3" gap="181" thumb="527"></scroll-bar></div>
 <aws-footer></aws-footer>`);

/* taskbar */
define('task-app',`:host{width:75px;height:56px;align-items:center;justify-content:center;position:relative}
 :host([run]):after{content:"";position:absolute;left:7px;bottom:0;width:61px;height:3px;background:#76b9ff}`,`<slot></slot>`);
define('task-bar',`:host{width:1920px;height:60px;padding-top:4px;background:linear-gradient(90deg,#22393e 0,#20343c 30%,#1b2a3d 58%,#1a2542 78%,#1c2240 100%);color:#fff;align-items:center;font:22px/30px ${SEG}}
 .s{width:432px;height:56px;background:#fdfdfd;border:3px solid #b3b3b3;border-top:0;margin-left:24px;display:flex;align-items:center;color:#2b2b2b;flex:none}
 .p{width:117px;height:53px;background:#f0f0f0;margin-left:auto;display:flex;align-items:center}
 .c{width:88px;flex:none;text-align:center;font-size:18px;line-height:27px;margin-left:12px;display:flex;flex-direction:column;align-items:center}`,
 `<ui-icon name="win" x="24" w="24" style="margin-top:-4px"></ui-icon><div class="s"><ui-icon name="wsearch" x="15" w="25" style="margin-top:-3px"></ui-icon><ui-text w="198" x="17" style="margin-top:-2px">Type here to search</ui-text><div class="p"><ui-icon name="plane" x="16" w="44"></ui-icon><ui-icon name="hat" x="7" w="37"></ui-icon></div></div>
 <ui-icon name="tasks" x="23" style="margin-top:-5px"></ui-icon><task-app run style="margin-left:27px"><ui-icon name="folder" style="margin-top:-4px"></ui-icon></task-app>
 <task-app><ui-icon name="zoom" style="margin-top:-4px"></ui-icon></task-app><task-app><ui-icon name="pen" w="35" style="margin-top:-4px"></ui-icon></task-app><task-app><ui-icon name="firefox" w="35" style="margin-top:-4px"></ui-icon></task-app><task-app run><ui-icon name="chrome" x="2"></ui-icon></task-app><task-app run><ui-icon name="notepad" style="margin-top:-4px"></ui-icon></task-app><task-app run><ui-icon name="paint" style="margin-top:-3px"></ui-icon></task-app><task-app run><ui-icon name="snail" w="34"></ui-icon></task-app>
 <ui-icon name="weather" x="149" w="36" style="margin-top:-5px"></ui-icon><ui-text w="44" x="12" style="margin-top:-2px">32°C</ui-text><ui-text w="130" x="12" style="margin-top:-2px">Mostly cloudy</ui-text><ui-icon name="chev" x="38" style="margin-top:-5px"></ui-icon><ui-icon name="meet" x="19" style="margin-top:-4px"></ui-icon><ui-icon name="batt" x="17" style="margin-top:-4px"></ui-icon><ui-icon name="vol" x="11" style="margin-top:-4px"></ui-icon>
 <div class="c" style="margin-top:-3px"><ui-text w="65">9:03 PM</ui-text><ui-text w="74">7/2/2023</ui-text></div><ui-icon name="note" x="26" style="margin-top:-5px"></ui-icon><div style="width:2px;height:56px;background:#74798c;margin-left:28px"></div>`);

/* floating annotation palette and ink strokes */
define('ink-palette',`:host{flex-direction:column;align-items:center;width:51px;gap:11px}
 .b{width:51px;height:591px;padding:2px 3px 4px;background:#fff;box-shadow:0 3px 22px #0007;display:flex;flex-direction:column}
 .y{background:#35c4ee}.y+.y{box-shadow:inset 0 1px #6cd3f0}
 .c{display:grid;grid-template:23px 22px 45px/22px 23px;height:90px;background:#ff0a87}.c i:nth-child(3){grid-column:2}`,
 `<ui-icon name="penbig"></ui-icon><div class="b">${['eye','cursor','pencil','line','eraser','dot','undo','trash','board','camera','clip'].map((n,i)=>`<ui-icon name="${n}"${i<2?' class="y"':''}></ui-icon>`).join('')}
 <div class="c"><i style="background:#00aef0"></i><i style="background:#fff200"></i><i style="background:#000"></i></div></div>`);
define('ink-layer',`:host{display:block}svg{display:block}`,
 `<svg width="1920" height="1080" fill="none" stroke="#ff0a87" stroke-width="7" stroke-linejoin="round" stroke-linecap="round"><path d="M473 485L469 486H451L441 492 434 503 433 533 443 550 457 561 475 564 492 561 508 548 517 533 518 523 512 510 506 505 492 501 484 493 473 485"/><path d="M1251 276H1234L1224 281 1217 292 1210 302 1207 308 1203 315 1198 335 1197 349 1201 354 1217 363 1237 372 1255 378 1271 379H1289L1297 374 1314 368 1335 354 1356 339 1359 327 1356 320 1342 305 1331 295 1315 284 1303 280 1290 278H1262L1255 281 1242 280"/></svg>`);
define('back-window',`:host{width:10px;height:1020px;flex-direction:column;background:linear-gradient(90deg,#fbfbfb,#f2f2f2 60%,#d5d5d5);font:18px/24px ${SEG};overflow:hidden;color:#444}
 .t{height:63px;border-bottom:2px solid #dcdcdc;flex:none}.i{width:14px;height:21px;margin:6px 0 0 3px;background:#a8d8df;border-left:1px solid #6cb0bc;transform:skewX(-10deg)}.k{margin:10px 0 0 7px}
 .z{margin-top:auto;height:36px;border-top:1px solid #ccc;background:#e7e7e7}`,
 `<div class="t"><div class="i"></div><div class="k">F</div></div><div class="z"></div>`);
define('desk-top',`:host{position:relative;width:1920px;height:1080px;overflow:hidden;background:#fff;flex-direction:column}
 .w{display:flex;height:1020px;flex:none}browser-window{z-index:1;box-shadow:0 2px 5px #0006}
 ink-layer{position:absolute;left:0;top:0;z-index:2}ink-palette{position:absolute;left:1835px;top:252px;z-index:3}`,
 `<div class="w"><back-window></back-window><browser-window></browser-window></div><task-bar></task-bar><ink-layer></ink-layer><ink-palette></ink-palette>`);
</script></body></html>
